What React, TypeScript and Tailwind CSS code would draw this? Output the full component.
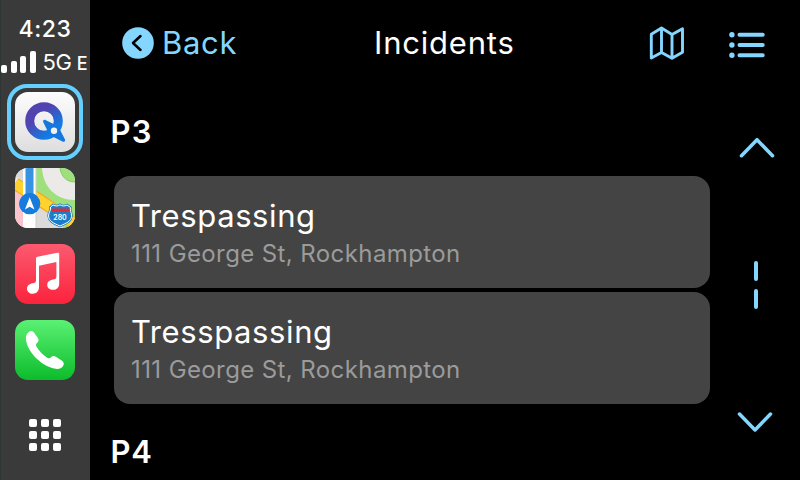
const incidents = [
    { title: "Trespassing", address: "111 George St, Rockhampton" },
    { title: "Tresspassing", address: "111 George St, Rockhampton" },
];

const bars = ["h-[8px]", "h-[12px]", "h-[17px]", "h-[22px]"];

function QIcon() {
    return (
        <svg viewBox="0 0 60 60" className="size-[60px] rounded-[13px]">
            <defs>
                <linearGradient id="qbg" x1="0" y1="0" x2="0" y2="1">
                    <stop offset="0" stopColor="#fdfdfd" />
                    <stop offset="1" stopColor="#dedede" />
                </linearGradient>
                <linearGradient id="qfg" gradientUnits="userSpaceOnUse" x1="18" y1="16" x2="42" y2="44">
                    <stop offset="0.25" stopColor="#5143b0" />
                    <stop offset="0.85" stopColor="#0f7ee6" />
                </linearGradient>
            </defs>
            <rect width="60" height="60" fill="url(#qbg)" />
            <circle cx="29" cy="29" r="14.3" fill="none" stroke="url(#qfg)" strokeWidth="9" />
            <path d="M28.2 30c-.6-1.600.8-2.700 2.200-2.100l12.800 6.300 6.700 13c.8 1.900-.8 3.200-2.500 2.300L34.500 43z" fill="#1478df" />
            <circle cx="39" cy="38.800" r="3.200" fill="#f1f1f1" />
        </svg>
    );
}

function MapsIcon() {
    return (
        <svg viewBox="0 0 60 60" className="size-[60px] rounded-[13px]">
            <rect width="60" height="60" fill="#eceae8" />
            <path d="M21 0h39v60H21z" fill="#9fe07c" />
            <path d="M27 0c1 19 14 32 33 32V14C51 14 46 8 45 0z" fill="#eceae8" />
            <path d="M45 0c1 8 6 14 15 14" fill="none" stroke="#83cd66" strokeWidth="1" />
            <path d="M21 34l27 18v8H21z" fill="#dbdbd9" />
            <path d="M0 22l9 8v30H0z" fill="#fbc3cc" />
            <path d="M0 15.500l64 43" fill="none" stroke="#f2ab20" strokeWidth="12.500" />
            <path d="M0 15.500l64 43" fill="none" stroke="#ffd22f" strokeWidth="10" />
            <path d="M0 0h8v13L0 8z" fill="#d9d9d7" />
            <path d="M8 0h13v60H8z" fill="#fff" />
            <path d="M21 0v60" stroke="#c9cdd0" strokeWidth="1" />
            <path d="M10.500 0h8v32h-8z" fill="#3792e2" />
            <circle cx="14.700" cy="35.700" r="10.600" fill="#167bdc" />
            <path d="M14.700 29.200l4.800 12.300-4.800-2.800-4.800 2.800z" fill="#fff" />
            <path d="M35.500 39l2.500-2c3 1.400 5 1.200 7-.2 2 1.400 4.500 1.600 7 .2l3.500 2.500c-1 3 1.300 5 1 9-.5 5-5 6.500-11.500 9.500C38 55 34 53 33.500 48c0-4 3-6 2-9z" fill="#1c7cc9" stroke="#1c7cc9" strokeWidth="2.400" />
            <path d="M35.500 39l2.500-2c3 1.400 5 1.200 7-.2 2 1.400 4.500 1.600 7 .2l3.500 2.500c-1 3 1.300 5 1 9-.5 5-5 6.500-11.500 9.500C38 55 34 53 33.500 48c0-4 3-6 2-9z" fill="#1c7cc9" stroke="#fff" strokeWidth="1" />
            <path d="M36.700 40.500h17.600l-.4 3.200H36.900z" fill="#e02b32" />
            <text x="45" y="51.500" textAnchor="middle" fontSize="7" fontWeight="600" fontFamily="Inter, sans-serif" fill="#fff">280</text>
        </svg>
    );
}

function MusicIcon() {
    return (
        <svg viewBox="0 0 60 60" className="size-[60px] rounded-[13px]">
            <defs>
                <linearGradient id="mbg" x1="0" y1="0" x2="0" y2="1">
                    <stop offset="0" stopColor="#fc5a70" />
                    <stop offset="1" stopColor="#fb233c" />
                </linearGradient>
            </defs>
            <rect width="60" height="60" fill="url(#mbg)" />
            <path d="M21 14.500c0-1 .5-1.600 1.500-1.800l20-4c1-.2 1.700.3 1.700 1.300v29.500c0 4-2.400 6.300-6.200 6.300-3.400 0-5.800-2-5.800-4.900 0-3 2.200-4.700 5.600-5.300 2.600-.4 3.600-.9 3.600-3V18L24 21.800V43c0 4-2.500 6.700-6.200 6.700-3.500 0-5.800-2.100-5.800-5 0-3.100 2.300-4.900 5.700-5.500 2.400-.4 3.300-1 3.300-3z" fill="#fff" />
        </svg>
    );
}

function PhoneIcon() {
    return (
        <svg viewBox="0 0 60 60" className="size-[60px] rounded-[13px]">
            <defs>
                <linearGradient id="pbg" x1="0" y1="0" x2="0" y2="1">
                    <stop offset="0" stopColor="#5bf174" />
                    <stop offset="1" stopColor="#0cbc2b" />
                </linearGradient>
            </defs>
            <rect width="60" height="60" fill="url(#pbg)" />
            <path d="M13.500 12.300c2-1.800 4.200-1.500 5.700.5l3.600 5.200c1.200 1.900.9 3.400-.6 4.800-1.600 1.500-1.600 2.300-.6 4 2.500 4.300 6 8 10.600 10.900 1.600 1 2.500.9 3.800-.4 1.500-1.500 3-1.700 4.900-.5l5.800 3.700c2.400 1.500 2.700 3.700 1.200 5.800-2 2.800-5 3.100-8.900 2.200C25.500 45.500 11.300 30.500 10.900 18.500c-.1-2.600.8-4.600 2.600-6.200z" fill="#fff" />
        </svg>
    );
}

function Sidebar() {
    return (
        <aside className="flex w-[90px] shrink-0 flex-col items-center border-l border-[#2c3634] bg-[#3a3a3a] pr-px">
            <div className="mt-[15px] text-[23px] leading-7 font-medium tracking-[0.6px]">4:23</div>
            <div className="mt-[5px] flex h-[26px] w-full items-end">
                <div className="mb-px flex items-end gap-[3.5px]">
                    {bars.map((h) => (
                        <div key={h} className={`w-[6px] rounded-[2px] bg-white ${h}`} />
                    ))}
                </div>
                <span className="ml-[7px] text-[22px] leading-[23px] tracking-[-0.3px]">5G</span>
                <span className="ml-[5px] text-[18px] leading-[20px] font-medium">E</span>
            </div>
            <div className="mt-[10px] rounded-[20px] border-4 border-[#64d0ff] p-1">
                <QIcon />
            </div>
            <div className="mt-2 flex flex-col gap-4">
                <MapsIcon />
                <MusicIcon />
                <PhoneIcon />
            </div>
            <div className="mt-[39px] grid grid-cols-3 gap-1">
                {Array.from({ length: 9 }, (_, i) => (
                    <div key={i} className="size-2 rounded-[2px] bg-white" />
                ))}
            </div>
        </aside>
    );
}

function Header() {
    return (
        <header className="flex h-[86px] shrink-0 items-center pl-[32px] text-[31px] leading-[38px]">
            <button className="flex w-[252px] items-center gap-[8px] text-[#84d6ff]">
                <svg viewBox="0 0 32 32" className="size-8">
                    <circle cx="16" cy="16" r="15.800" fill="currentColor" />
                    <path d="M18.500 9l-7.500 7 7.500 7" fill="none" stroke="#000" strokeWidth="2.500" strokeLinecap="round" strokeLinejoin="round" />
                </svg>
                <span className="tracking-[0.7px]">Back</span>
            </button>
            <h1 className="w-[275px] tracking-[0.8px]">Incidents</h1>
            <svg viewBox="0 0 36 34" className="h-[34px] w-[36px] text-[#84d6ff]" fill="none" stroke="currentColor" strokeWidth="2.900" strokeLinejoin="round">
                <path d="M2.300 8.200L12.500 2l10.500 6.500L33.500 2.700v23.500L23 32.300 12.500 26.500 2.300 32zM12.500 2v24.500M23 8.500v24" />
            </svg>
            <svg viewBox="0 0 36 28" className="mt-[3px] ml-[44px] h-[28px] w-[36px] text-[#84d6ff]" stroke="currentColor" strokeLinecap="round">
                <path d="M10.500 3.700h23.200M10.500 14h23.200M10.500 24.200h23.200" strokeWidth="4" />
                <path d="M2.900 3.700h.01M2.900 14h.01M2.900 24.200h.01" strokeWidth="5.400" />
            </svg>
        </header>
    );
}

export default function App() {
    return (
        <div className="flex h-[480px] w-[800px] overflow-hidden bg-black font-['Inter',sans-serif] text-white">
            <Sidebar />
            <main className="flex min-w-0 flex-1 flex-col">
                <Header />
                <div className="flex min-h-0 flex-1">
                    <div className="w-[620px] shrink-0 overflow-hidden">
                        <h2 className="mt-7 ml-[20.5px] text-[31px] leading-9 font-semibold tracking-[1.2px]">P3</h2>
                        <div className="mt-[26px] ml-6 flex flex-col gap-1">
                            {incidents.map((item) => (
                                <div key={item.title} className="h-[112px] rounded-[16px] bg-[#444444] px-[18px] pt-[22px]">
                                    <div className="-ml-px text-[31px] leading-9 tracking-[0.6px]">{item.title}</div>
                                    <div className="mt-[5px] -ml-px text-[24px] leading-[30px] tracking-[0.4px] text-[#9b9b9b]">{item.address}</div>
                                </div>
                            ))}
                        </div>
                        <h2 className="mt-[30px] ml-[20.5px] text-[31px] leading-9 font-semibold tracking-[0.8px]">P4</h2>
                    </div>
                    {/* scroll controls */}
                    <div className="flex flex-1 flex-col items-center text-[#84d6ff]">
                        <svg viewBox="0 0 38 22" className="mt-[51px] ml-[4px] h-[22px] w-[38px]" fill="none" stroke="currentColor" strokeWidth="3.500" strokeLinecap="round" strokeLinejoin="round">
                            <path d="M3.500 18.700L19 2.700l15.500 16" />
                        </svg>
                        <div className="mt-[102px] ml-[2px] flex flex-col gap-2">
                            <div className="h-5 w-[3.500px] rounded-full bg-[#84d6ff]" />
                            <div className="h-5 w-[3.500px] rounded-full bg-[#84d6ff]" />
                        </div>
                        <svg viewBox="0 0 38 22" className="mt-[102px] h-[22px] w-[38px]" fill="none" stroke="currentColor" strokeWidth="3.500" strokeLinecap="round" strokeLinejoin="round">
                            <path d="M3.500 3l15.500 16L34.500 3" />
                        </svg>
                    </div>
                </div>
            </main>
        </div>
    );
}
